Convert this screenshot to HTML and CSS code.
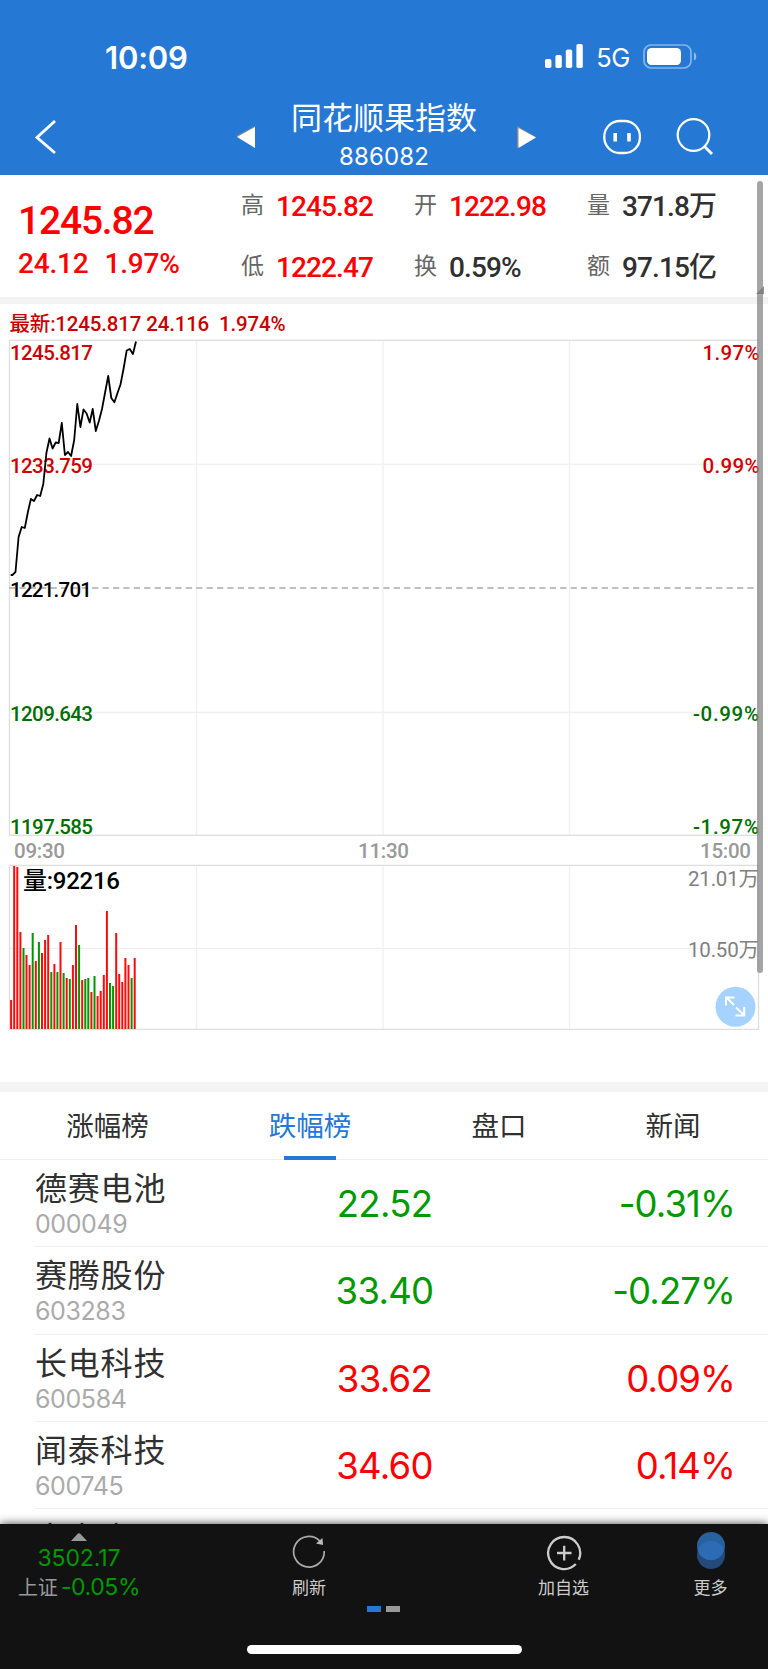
FILE: index.html
```
<!DOCTYPE html>
<html lang="zh-CN">
<head>
    <meta charset="UTF-8">
    <meta name="viewport" content="width=device-width, initial-scale=1.0">
    <title>同花顺果指数</title>
    <link rel="stylesheet" href="styles.css">
</head>

<body>
    <header class="header">
        <div class="status">
            <span class="clock">10:09</span>
            <div class="status-right">
                <svg class="signal" width="38" height="24" viewBox="0 0 38 24" fill="#fff">
                    <rect x="0" y="15" width="6.4" height="9" rx="1.8"/>
                    <rect x="10.4" y="11" width="6.4" height="13" rx="1.8"/>
                    <rect x="20.8" y="5.5" width="6.4" height="18.5" rx="1.8"/>
                    <rect x="31.4" y="0" width="6.4" height="24" rx="1.8"/>
                </svg>
                <span class="network">5G</span>
                <svg class="battery" width="55" height="25" viewBox="0 0 55 25">
                    <rect x="1" y="1" width="47" height="23" rx="7" fill="none" stroke="#fff" stroke-opacity=".45" stroke-width="1.7"/>
                    <rect x="4" y="4" width="34" height="17" rx="4.5" fill="#fff"/>
                    <path d="M51 8.5c3 1 3 7 0 8z" fill="#fff" fill-opacity=".5"/>
                </svg>
            </div>
        </div>

        <div class="navbar">
            <svg class="back" width="24" height="36" viewBox="0 0 24 36" fill="none" stroke="#fff" stroke-width="2.9">
                <path d="M22 2L4 18.500L22 34"/>
            </svg>
            <svg class="prev" width="20" height="22" viewBox="0 0 20 22"><path d="M0 10L19 0V4L4 11z" fill="#8c8c8c"/><path d="M1 11L19 1V22z" fill="#fff"/></svg>
            <div class="title">
                <h1>同花顺果指数</h1>
                <p>886082</p>
            </div>
            <svg class="next" width="20" height="22" viewBox="0 0 20 22"><path d="M0 0L19 11L0 22z" fill="#8c8c8c"/><path d="M1.500 2L19 11.500L1.500 22z" fill="#fff"/></svg>
            <svg class="robot" width="38" height="36" viewBox="0 0 38 36" fill="none" stroke="#fff">
                <rect x="1.300" y="2" width="35.600" height="32" rx="15.500" stroke-width="2.300"/>
                <path d="M12.200 14v8.500M26 14v8.500" stroke-width="3.600"/>
            </svg>
            <svg class="search" width="38" height="38" viewBox="0 0 38 38" fill="none" stroke="#fff" stroke-width="2.200">
                <circle cx="17.500" cy="17" r="15.800"/>
                <path d="M28 28L36 36" stroke-width="2.800"/>
            </svg>
        </div>
    </header>

    <section class="quote">
        <div class="quote-main">
            <strong>1245.82</strong>
            <p><span>24.12</span><span>1.97%</span></p>
        </div>
        <dl class="quote-grid">
            <div><dt>高</dt><dd class="up">1245.82</dd></div>
            <div><dt>开</dt><dd class="up">1222.98</dd></div>
            <div><dt>量</dt><dd>371.8万</dd></div>
            <div><dt>低</dt><dd class="up">1222.47</dd></div>
            <div><dt>换</dt><dd>0.59%</dd></div>
            <div><dt>额</dt><dd>97.15亿</dd></div>
        </dl>
    </section>

    <section class="chart">
        <svg width="768" height="778" viewBox="0 304 768 778">
            <g class="grid">
                <path d="M196.500 341V835M383 341V835M569.500 341V835M10 464.300H758M10 712.500H758"/>
                <path d="M196.500 866V1029M383 866V1029M569.500 866V1029M10 948.300H758"/>
            </g>
            <g class="frame">
                <rect x="9.500" y="340.300" width="749" height="495"/>
                <path d="M128 865.300H758.500V1029.300H9.500V865.300H128"/>
            </g>
            <path class="base" d="M9 588H758"/>

            <text class="latest" x="9.500" y="330.500" textLength="276" xml:space="preserve">最新:1245.817 24.116  1.974%</text>

            <g class="axis red">
                <text x="10" y="360" textLength="83">1245.817</text>
                <text x="10" y="473" textLength="83">1233.759</text>
                <text x="702.500" y="360" textLength="57">1.97%</text>
                <text x="702.500" y="473" textLength="57">0.99%</text>
            </g>
            <g class="axis black">
                <text x="10" y="597" textLength="82">1221.701</text>
            </g>
            <g class="axis green">
                <text x="10" y="721" textLength="83">1209.643</text>
                <text x="10" y="833.500" textLength="83">1197.585</text>
                <text x="693" y="721" textLength="66">-0.99%</text>
                <text x="693" y="833.500" textLength="66">-1.97%</text>
            </g>
            <g class="axis gray">
                <text x="14" y="857.500" textLength="51">09:30</text>
                <text x="358" y="857.500" textLength="51">11:30</text>
                <text x="700" y="857.500" textLength="51">15:00</text>
            </g>
            <g class="axis dim">
                <text x="688" y="886" textLength="71">21.01万</text>
                <text x="688" y="956.500" textLength="71">10.50万</text>
            </g>

            <polyline id="price"/>
            <g id="volume"></g>
            <text class="vol-label" x="23" y="889" textLength="97">量:92216</text>

            <g class="expand">
                <circle cx="735.500" cy="1006.800" r="20"/>
                <path d="M734 1005L726 997M726 1005.500V997.500H734.500M736 1007.500L744 1015M744.200 1007V1015.500H735.500"/>
            </g>
        </svg>
    </section>

    <nav class="tabs">
        <a>涨幅榜</a>
        <a class="active">跌幅榜</a>
        <a>盘口</a>
        <a>新闻</a>
    </nav>

    <ul class="stocks">
        <li class="down"><div><b>德赛电池</b><small>000049</small></div><span class="last">22.52</span><span class="rate">-0.31%</span></li>
        <li class="down"><div><b>赛腾股份</b><small>603283</small></div><span class="last">33.40</span><span class="rate">-0.27%</span></li>
        <li class="up"><div><b>长电科技</b><small>600584</small></div><span class="last">33.62</span><span class="rate">0.09%</span></li>
        <li class="up"><div><b>闻泰科技</b><small>600745</small></div><span class="last">34.60</span><span class="rate">0.14%</span></li>
        <li class="up"><div><b>京东方A</b></div></li>
    </ul>

    <footer class="footer">
        <div class="actions">
            <div class="market">
                <svg width="16" height="8" viewBox="0 0 16 8"><path d="M0 8L6 1.500Q8 -.8 10 1.500L16 8z" fill="#999"/></svg>
                <span class="market-value">3502.17</span>
                <p>上证<span>-0.05%</span></p>
            </div>
            <div class="action refresh">
                <svg width="36" height="36" viewBox="0 0 36 36" fill="none" stroke="#aaa" stroke-width="1.700">
                    <path d="M33.200 16A15.300 15.300 0 1 1 28.800 6"/>
                    <path d="M31.500 3L32 10L25 8.500z" fill="#bbb" stroke="none"/>
                </svg>
                <span>刷新</span>
            </div>
            <div class="action add">
                <svg width="36" height="36" viewBox="0 0 36 36" fill="none" stroke="#ccc" stroke-width="2.300">
                    <path d="M32.700 24.700A16 16 0 1 0 29.800 29"/>
                    <path d="M11 18H25.500M18.200 10.800V25.500"/>
                </svg>
                <span>加自选</span>
            </div>
            <div class="action more">
                <svg width="30" height="40" viewBox="0 0 30 40">
                    <circle cx="15" cy="26" r="14" fill="#234a78"/>
                    <circle cx="15" cy="17" r="14" fill="#29619f"/>
                    <path d="M1.700 21.500A14 14 0 0 1 28.300 21.500A14 14 0 0 1 1.700 21.500z" fill="#2d6bb5"/>
                </svg>
                <span>更多</span>
            </div>
        </div>
        <div class="dots"><i class="on"></i><i></i></div>
        <div class="home-bar"></div>
    </footer>

    <div class="scrollbar"></div>
    <div class="corner"></div>

    <script>
        // one entry per minute, distance from the top of the plot
        const price = [235, 232, 197, 187, 188, 172, 159, 161, 155, 156, 144, 113, 98.5, 108.5, 102.5, 103,
            83, 115, 112, 116, 100, 64, 87, 69.5, 73.5, 82.5, 69, 91, 81, 69, 52.5, 36, 58, 62.3, 53, 44.5, 28.5, 10.5, 9, 14, 1.5];
        const points = price.map((y, i) => `${(12.4 + i * 3.09).toFixed(1)},${340 + y}`);
        document.getElementById('price').setAttribute('points', '10.7,575 ' + points.join(' '));

        // negative = falling minute
        const volume = [29, 163, 162, 97, -81, 74, 64, -96, 68, -87, 76, 89, 94, -57, 65, -57, 87, -56, 51, -50,
            64, 104, -84, 49, -50, -51, 37, -53, 33, 38, 54, 118, -46, -43, 96, 55, 47, 71, 64, -51, 71];
        document.getElementById('volume').innerHTML = volume.map((v, i) => {
            const h = Math.abs(v);
            return `<rect x="${(10.1 + i * 3.09).toFixed(1)}" y="${1029 - h}" width="2" height="${h}" class="${v < 0 ? 'fall' : 'rise'}"/>`;
        }).join('');
    </script>
</body>
</html>
```
FILE: styles.css
```
* {
    box-sizing: border-box;
}

body {
    width: 768px;
    height: 1669px;
    margin: 0;
    overflow: hidden;
    position: relative;
    display: flex;
    flex-direction: column;
    background-color: #fff;
    color: #303030;
    font-family: Inter, "Noto Sans CJK SC", sans-serif;
}

h1, p, dl, dd, ul {
    margin: 0;
    padding: 0;
}

svg {
    display: block;
    flex-shrink: 0;
}

.up {
    color: #f00;
}

.down {
    color: #009a00;
}

/* header */
.header {
    height: 175px;
    flex-shrink: 0;
    background-color: #2578d4;
    color: #fff;
}

.status {
    height: 98px;
    padding: 37px 70px 0 105px;
    display: flex;
    justify-content: space-between;
}

.clock {
    font-size: 31px;
    font-weight: 600;
    line-height: 41px;
    letter-spacing: -0.2px;
}

.status-right {
    height: 38px;
    display: flex;
    align-items: center;
}

.network {
    margin: 3px 13px 0 13px;
    font-size: 25.5px;
    font-weight: 400;
    letter-spacing: -0.4px;
}

.navbar {
    height: 77px;
    padding-left: 33px;
    display: flex;
    align-items: center;
}

.prev {
    margin-left: 179px;
}

.title {
    width: 256px;
    text-align: center;
}

.title h1 {
    margin-top: -3px;
    font-size: 31px;
    font-weight: 400;
    line-height: 40px;
}

.title p {
    padding-top: 3px;
    font-size: 24px;
    line-height: 32px;
    letter-spacing: 0.1px;
}

.next {
    margin-left: 5px;
}

.robot {
    margin-left: 66px;
}

.search {
    margin-left: 35px;
}

/* quote */
.quote {
    height: 129px;
    flex-shrink: 0;
    display: flex;
    border-bottom: 7px solid #f3f3f3;
    font-family: Roboto, "Noto Sans CJK SC", sans-serif;
    font-weight: 500;
}

.quote-main {
    width: 241px;
    padding: 25px 0 0 18px;
    color: #f00;
}

.quote-main strong {
    display: block;
    font-size: 39px;
    font-weight: 500;
    line-height: 43px;
    letter-spacing: -1.2px;
}

.quote-main p {
    display: flex;
    gap: 16px;
    padding-top: 5px;
    font-size: 28px;
    line-height: 32px;
    letter-spacing: -0.2px;
}

.quote-grid {
    flex: 1;
    display: grid;
    grid-template-columns: 173px 173px 1fr;
    grid-template-rows: 61px 61px;
}

.quote-grid div {
    display: flex;
    align-items: center;
    line-height: 32px;
}

.quote-grid dt {
    width: 35px;
    color: #666;
    font-size: 23px;
    font-weight: 400;
}

.quote-grid dd {
    padding-top: 2px;
    font-size: 28px;
    letter-spacing: -0.9px;
    white-space: nowrap;
}

/* chart */
.chart {
    height: 778px;
    flex-shrink: 0;
    font-family: Roboto, "Noto Sans CJK SC", sans-serif;
    font-weight: 500;
}

.grid path {
    fill: none;
    stroke: #f0f0f0;
    stroke-width: 1.3;
}

.frame rect,
.frame path {
    fill: none;
    stroke: #dedede;
    stroke-width: 1.3;
}

.base {
    stroke: #aaa;
    stroke-width: 1.6;
    stroke-dasharray: 6.2 4.2;
}

.latest {
    fill: #c80000;
    font-size: 20.5px;
}

.axis {
    font-size: 20.5px;
}

.red {
    fill: #d00000;
}

.black {
    fill: #000;
}

.green {
    fill: #006e00;
}

.gray {
    fill: #999;
}

.dim {
    fill: #808080;
    font-weight: 400;
}

.vol-label {
    font-size: 24px;
    fill: #000;
}

#price {
    fill: none;
    stroke: #000;
    stroke-width: 1.8;
    stroke-linejoin: round;
}

.rise {
    fill: #ff0a0a;
}

.fall {
    fill: #009600;
}

.expand circle {
    fill: #a6d2ff;
}

.expand path {
    fill: none;
    stroke: #fff;
    stroke-width: 2;
}

/* tabs */
.tabs {
    height: 78px;
    flex-shrink: 0;
    display: grid;
    grid-template-columns: 215px 190px 188px 1fr;
    border-top: 10px solid #f4f4f4;
    border-bottom: 1px solid #efefef;
}

.tabs a {
    display: flex;
    flex-direction: column;
    align-items: center;
    font-size: 27.5px;
    line-height: 40px;
    padding-top: 14px;
}

.tabs a:last-child {
    padding-right: 15px;
}

.tabs .active {
    color: #2578d8;
}

.tabs .active::after {
    content: "";
    width: 52px;
    height: 4px;
    margin-top: 10px;
    background-color: #2578d8;
}

/* list */
.stocks {
    flex: 1;
    min-height: 0;
    overflow: hidden;
    list-style: none;
}

.stocks li {
    height: 87.3px;
    margin-left: 35px;
    padding-right: 33px;
    display: grid;
    grid-template-columns: 220px 1fr 1fr;
    border-bottom: 1px solid #f0f0f0;
}

.stocks li:last-child {
    padding-top: 1px;
}

.stocks b {
    display: block;
    padding-top: 9px;
    color: #303030;
    font-size: 32px;
    font-weight: 400;
    line-height: 40px;
    letter-spacing: 0.8px;
}

.stocks small {
    display: block;
    color: #aaa;
    font-size: 25px;
    line-height: 30px;
    letter-spacing: -0.4px;
}

.last,
.rate {
    font-size: 36.5px;
    line-height: 89px;
    letter-spacing: -0.7px;
}

.last {
    width: 259px;
    text-align: center;
}

.rate {
    text-align: right;
    letter-spacing: -0.9px;
}

/* bottom bar */
.footer {
    height: 145px;
    flex-shrink: 0;
    position: relative;
    background-color: #121212;
    box-shadow: 0 0 9px rgba(0, 0, 0, 0.75);
    color: #ccc;
}

.actions {
    height: 80px;
    display: flex;
}

.market {
    width: 158px;
    padding-top: 9px;
    display: flex;
    flex-direction: column;
    align-items: center;
}

.market-value,
.market p span {
    color: #009a00;
    font-size: 23px;
    letter-spacing: -0.1px;
}

.market-value {
    line-height: 28px;
    margin-top: 3px;
}

.market p {
    color: #999;
    font-size: 20px;
    line-height: 30px;
    white-space: nowrap;
}

.market p span {
    margin-left: 3px;
    letter-spacing: -0.4px;
}

.action {
    display: flex;
    flex-direction: column;
    align-items: center;
    padding-top: 11px;
    font-size: 17px;
}

.action span {
    line-height: 24px;
    margin-top: 5px;
}

.refresh {
    width: 302px;
}

.add {
    width: 207px;
}

.more {
    width: 87px;
    padding-top: 5px;
}

.more span {
    margin-top: 7px;
}

.dots {
    display: flex;
    gap: 5px;
    padding: 2px 0 0 367px;
}

.dots i {
    width: 14px;
    height: 6px;
    background-color: #999;
}

.dots .on {
    background-color: #2578d8;
}

.home-bar {
    width: 275px;
    height: 9px;
    margin: 33px auto 0;
    border-radius: 5px;
    background-color: #fff;
}

/* page scroll indicator */
.scrollbar {
    position: absolute;
    top: 181px;
    left: 757px;
    width: 6px;
    height: 792px;
    border-radius: 3px;
    background-color: rgba(130, 130, 130, 0.72);
}

.corner {
    position: absolute;
    top: 286px;
    left: 756px;
    border-left: 8px solid transparent;
    border-bottom: 8px solid rgba(120, 120, 120, 0.8);
}
```
